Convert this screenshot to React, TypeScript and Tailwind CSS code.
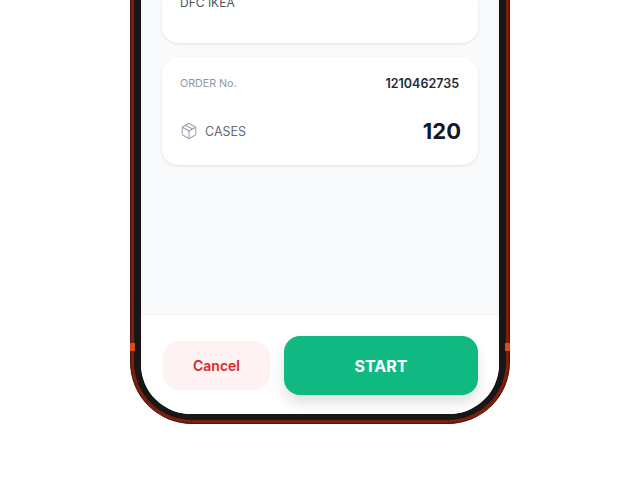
import React from "react";
import { Package } from "lucide-react";

export default function App() {
  return (
    <div className="w-[640px] h-[479px] bg-white overflow-hidden font-['Inter',sans-serif]">
      <div className="relative mx-auto w-[380px] h-[424px] rounded-b-[62px] bg-[#7c1f0d] border-x border-b border-[#4a1208] px-[3px] pb-[3px] box-border">
        <div className="absolute left-[-1px] top-[343px] w-[5px] h-[8px] bg-[#e0481a]" />
        <div className="absolute right-[-1px] top-[343px] w-[5px] h-[8px] bg-[#e0481a]" />
        <div className="h-full rounded-b-[58px] bg-[#171717] px-[7px] pb-[6px]">
          <div className="h-full rounded-b-[50px] overflow-hidden bg-[#f9fafb] flex flex-col">
            <div className="flex-1 px-[21px] flex flex-col gap-[14px]">
              <div className="h-[43px] bg-white rounded-b-2xl shadow-[0_1px_3px_rgba(0,0,0,0.1)] px-[18px] text-[12px] leading-[16px] text-[#4b5563]">
                <div className="-mt-[5px]">DFC IKEA</div>
              </div>
              <div className="h-[108px] bg-white rounded-2xl shadow-[0_1px_3px_rgba(0,0,0,0.1)] px-[18px] flex flex-col">
                <div className="flex items-center justify-between mt-[19px] h-[16px]">
                  <span className="text-[10.7px] text-[#8f96a3]">ORDER No.</span>
                  <span className="text-[12.5px] font-semibold text-[#1f2937] mr-[1px]">1210462735</span>
                </div>
                <div className="flex items-center justify-between mt-[25px] h-[28px]">
                  <div className="flex items-center gap-[7px]">
                    <Package size={18} strokeWidth={1.4} className="text-[#9ca3af]" />
                    <span className="text-[12.5px] text-[#636b78] mt-[2px]">CASES</span>
                  </div>
                  <span className="text-[22px] font-bold text-[#111827] mr-[-1px]">120</span>
                </div>
              </div>
            </div>
            <div className="h-[100px] bg-white border-t border-[#f3f4f6] pl-[22px] pr-[21px] pt-[21px] flex items-start gap-[14px]">
              <button className="mt-[5px] w-[107px] h-[49px] rounded-2xl bg-[#fef2f2] text-[#dc2626] text-[14px] font-semibold">Cancel</button>
              <button className="w-[194px] h-[59px] rounded-2xl bg-[#10b981] text-white text-[16px] font-bold shadow-[0_8px_14px_rgba(0,0,0,0.12)]">START</button>
            </div>
          </div>
        </div>
      </div>
    </div>
  );
}
